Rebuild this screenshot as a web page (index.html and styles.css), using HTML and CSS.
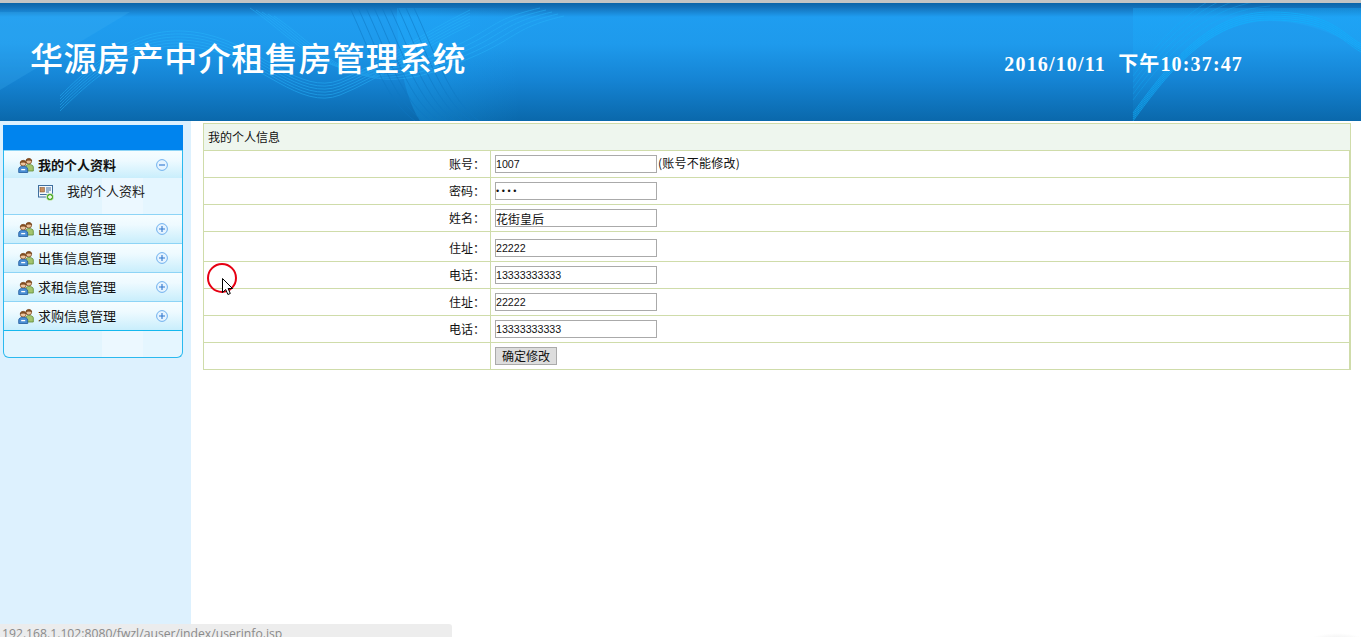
FILE: index.html
```html
<!DOCTYPE html>
<html lang="zh-CN">
<head>
<meta charset="utf-8">
<title>华源房产中介租售房管理系统</title>
<link rel="stylesheet" href="styles.css">
</head>
<body>
<svg class="defs" width="0" height="0" aria-hidden="true">
  <defs>
    <symbol id="users" viewBox="0 0 16 16">
      <circle cx="10.8" cy="4.2" r="2.8" fill="#eabf95" stroke="#7a4a22" stroke-width=".8"/>
      <path d="M7.9 3.8c.5-2.4 5.2-2.8 5.9 0-1.7-.8-4-.8-5.9 0z" fill="#8a5326" stroke="#6e3f18" stroke-width=".5"/>
      <path d="M8 14V9.8c0-1.6 1.2-2.4 2.9-2.4s4.4.8 4.4 2.4V14z" fill="#a3c46e" stroke="#5d8a35" stroke-width=".8"/>
      <circle cx="5.2" cy="6.2" r="2.9" fill="#f0c69e" stroke="#7a4a22" stroke-width=".8"/>
      <path d="M2.2 5.8c.5-2.4 5.3-2.8 6 .1-1.8-.9-4.1-.9-6-.1z" fill="#8a5326" stroke="#6e3f18" stroke-width=".5"/>
      <path d="M.7 15.5v-3.4c0-1.9 2-2.8 4.5-2.8s4.5.9 4.5 2.8v3.4z" fill="#4a8ed4" stroke="#1f5a9c" stroke-width=".8"/>
      <path d="M3.2 12.6h4" stroke="#fff" stroke-width="1.3"/>
    </symbol>
    <symbol id="plus" viewBox="0 0 12 12">
      <circle cx="6" cy="6" r="5.4" fill="#e6f4ff" stroke="#6fb0ee"/>
      <path d="M3 6h6M6 3v6" stroke="#2f77cf" stroke-width="1.1"/>
    </symbol>
    <symbol id="minus" viewBox="0 0 12 12">
      <circle cx="6" cy="6" r="5.4" fill="#e6f4ff" stroke="#6fb0ee"/>
      <path d="M3 6h6" stroke="#2f77cf" stroke-width="1.1"/>
    </symbol>
  </defs>
</svg>

<header class="banner">
  <svg class="waves" width="1361" height="118" viewBox="0 3 1361 118" aria-hidden="true">
    <defs>
      <linearGradient id="fade" x1="0" y1="0" x2="1" y2="0">
        <stop offset="0" stop-color="#1fb0ff" stop-opacity=".3"/>
        <stop offset="1" stop-color="#1fb0ff" stop-opacity="0"/>
      </linearGradient>
      <linearGradient id="fadeDown" x1="0" y1="0" x2="0" y2="1">
        <stop offset="0" stop-color="#1cb0ff" stop-opacity=".35"/>
        <stop offset="1" stop-color="#1cb0ff" stop-opacity=".05"/>
      </linearGradient>
      <path id="a" d="M60 96C110 46 150 22 205 34S300 96 340 80 420 34 470 10" fill="none"/>
      <path id="b" d="M250 8C300 42 330 92 415 62S480 22 540 8" fill="none"/>
      <path id="c" d="M1133 121C1170 70 1210 20 1270 20S1340 40 1361 52" fill="none"/>
      <path id="d" d="M330 8C350 50 365 100 395 121" fill="none"/>
      <path id="e" d="M1133 100C1170 50 1210 10 1270 6" fill="none"/>
    </defs>
    <path d="M0 12H130L0 90z" fill="#46b8f6" opacity=".22"/>
    <path d="M397 8H520V121H420C400 90 397 40 397 8z" fill="url(#fade)"/>
    <path d="M1133 121V8H1361V50C1330 30 1300 21 1270 21 1210 21 1170 70 1133 121z" fill="url(#fadeDown)"/>
    <g stroke="#27b4fb" stroke-width="1" opacity=".5">
      <use href="#a"/><use href="#a" y="3"/><use href="#a" y="6"/><use href="#a" y="9"/><use href="#a" y="12"/><use href="#a" y="15"/>
      <use href="#b"/><use href="#b" x="6" y="2"/><use href="#b" x="12" y="4"/><use href="#b" x="18" y="6"/><use href="#b" x="24" y="8"/>
    </g>
    <g stroke="#0f78c4" stroke-width="1" opacity=".55">
      <use href="#d" x="20"/><use href="#d" x="28"/><use href="#d" x="36"/><use href="#d" x="44"/><use href="#d" x="52"/><use href="#d" x="60"/><use href="#d" x="68"/><use href="#d" x="76"/><use href="#d" x="84"/>
    </g>
    <g stroke="#12b4ff" stroke-width="1" opacity=".6">
      <use href="#c"/><use href="#c" y="-2"/><use href="#c" y="-4"/><use href="#c" y="-6"/><use href="#c" y="-8"/>
    </g>
    <g stroke="#12b4ff" stroke-width="1" opacity=".3">
      <use href="#e"/><use href="#e" y="-6"/><use href="#e" y="-12"/><use href="#e" y="-18"/><use href="#e" y="-24"/>
    </g>
  </svg>
  <h1 class="title">华源房产中介租售房管理系统</h1>
  <div class="clock">2016/10/11&nbsp;&nbsp;下午10:37:47</div>
</header>

<div class="body-row">
  <aside class="sidebar">
    <nav class="panel">
      <div class="panel-head"></div>
      <div class="group-head active">
        <svg class="ico-users"><use href="#users"/></svg>
        <span class="group-label">我的个人资料</span>
        <svg class="ico-toggle"><use href="#minus"/></svg>
      </div>
      <div class="group-body">
        <svg class="ico-doc" viewBox="0 0 16 16" aria-hidden="true">
          <rect x=".5" y=".5" width="14" height="11.5" fill="#f4f8fc" stroke="#3f6f9f"/>
          <rect x="2" y="2.5" width="4.5" height="4.5" fill="#c78d5e" stroke="#7a4a22" stroke-width=".5"/>
          <path d="M8 3h5M8 5h5M8 7h3M2 9.5h7" stroke="#3f6f9f"/>
          <circle cx="12" cy="12" r="3.8" fill="#4fae2e" stroke="#fff" stroke-width=".7"/>
          <path d="M10 12h4M12 10v4" stroke="#fff" stroke-width="1.3"/>
        </svg>
        <span>我的个人资料</span>
      </div>
      <div class="group-head">
        <svg class="ico-users"><use href="#users"/></svg>
        <span class="group-label">出租信息管理</span>
        <svg class="ico-toggle"><use href="#plus"/></svg>
      </div>
      <div class="group-head">
        <svg class="ico-users"><use href="#users"/></svg>
        <span class="group-label">出售信息管理</span>
        <svg class="ico-toggle"><use href="#plus"/></svg>
      </div>
      <div class="group-head">
        <svg class="ico-users"><use href="#users"/></svg>
        <span class="group-label">求租信息管理</span>
        <svg class="ico-toggle"><use href="#plus"/></svg>
      </div>
      <div class="group-head last">
        <svg class="ico-users"><use href="#users"/></svg>
        <span class="group-label">求购信息管理</span>
        <svg class="ico-toggle"><use href="#plus"/></svg>
      </div>
      <div class="panel-foot"></div>
    </nav>
  </aside>

  <main class="content">
    <table class="info">
      <colgroup><col class="col-key"><col></colgroup>
      <tr class="row-title"><td colspan="2" class="caption">我的个人信息</td></tr>
      <tr><td class="key">账号：</td><td class="val"><input class="field" type="text" value="1007"><span class="note">(账号不能修改)</span></td></tr>
      <tr><td class="key">密码：</td><td class="val"><input class="field field-pass" type="password" value="1007"></td></tr>
      <tr><td class="key">姓名：</td><td class="val"><input class="field field-cjk" type="text" value="花街皇后"></td></tr>
      <tr class="row-tall"><td class="key">住址：</td><td class="val"><input class="field" type="text" value="22222"></td></tr>
      <tr><td class="key">电话：</td><td class="val"><input class="field" type="text" value="13333333333"></td></tr>
      <tr><td class="key">住址：</td><td class="val"><input class="field" type="text" value="22222"></td></tr>
      <tr><td class="key">电话：</td><td class="val"><input class="field" type="text" value="13333333333"></td></tr>
      <tr><td class="key"></td><td class="val"><button class="submit" type="button">确定修改</button></td></tr>
    </table>
  </main>
</div>

<svg class="pointer" width="34" height="38" viewBox="0 0 34 38" aria-hidden="true">
  <circle cx="15" cy="15" r="14" fill="none" stroke="#e60012" stroke-width="2"/>
  <path d="M15.5 15.5v14l3.2-3 2.2 5 2.4-1-2.2-5h4.4z" fill="#fff" stroke="#000" stroke-width="1"/>
</svg>
<div class="statusbar">192.168.1.102:8080/fwzl/auser/index/userinfo.jsp</div>
<div class="corner-shadow"></div>
</body>
</html>
```
FILE: styles.css
```css
* { box-sizing: border-box; }
html, body {
  margin: 0;
  height: 100%;
  overflow: hidden;
  background: #fff;
}
body {
  display: flex;
  flex-direction: column;
  font: 12px "Noto Sans CJK SC", sans-serif;
  color: #111;
  border-top: 3px solid #c4c4c4;
}
.defs { position: absolute; }

.banner {
  position: relative;
  height: 118px;
  flex: none;
  display: flex;
  justify-content: space-between;
  align-items: center;
  padding: 0 118px 0 30px;
  background: linear-gradient(#0a64a8 0, #1370b8 4px, #1f9df0 14px, #1e9aec 35%, #1584d4 65%, #0a68ab 100%);
  overflow: hidden;
}
.waves { position: absolute; left: 0; top: 0; }
.title {
  position: relative;
  margin: -3px 0 0;
  font: 500 33px/1 "Liberation Serif", "Noto Sans CJK SC", serif;
  letter-spacing: .55px;
  color: #fff;
  white-space: nowrap;
}
.clock {
  position: relative;
  margin-top: 3px;
  font: 700 20px/1 "Liberation Serif", "Noto Sans CJK SC", serif;
  letter-spacing: 1.15px;
  color: #fff;
  white-space: nowrap;
}

.body-row { flex: 1; display: flex; min-height: 0; }

.sidebar {
  flex: none;
  width: 191px;
  padding: 4px 8px 0 3px;
  background: #ddf1fe;
}
.panel {
  border: 1px solid #2bb9ef;
  border-top: 0;
  border-radius: 0 0 6px 6px;
  background: linear-gradient(90deg, #e3f5fe 0 55%, #ecf8ff 55% 78%, #e5f6ff 78%);
}
.panel-head { height: 25px; margin: 0 -1px; background: #0084ee; }
.group-head {
  height: 29px;
  display: flex;
  align-items: center;
  padding-left: 14px;
  font-size: 13px;
  color: #111;
  background: linear-gradient(#f6fdff, #eefaff 35%, #c9eefc);
  border-top: 1px solid #8dd4f6;
}
.group-head.active { height: 28px; }
.group-head.active .group-label { font-weight: 700; padding: 0; }
.group-head.last { border-bottom: 1px solid #15b8ee; height: 30px; }
.ico-users { width: 16px; height: 16px; flex: none; margin-right: 4px; }
.group-label { flex: 1; line-height: 1; padding-bottom: 2px; }
.ico-toggle { width: 12px; height: 12px; flex: none; margin-right: 14px; }
.group-body {
  height: 36px;
  display: flex;
  align-items: flex-start;
  padding: 3px 0 0 34px;
  font-size: 13px;
  line-height: 20px;
  color: #222;
}
.ico-doc { width: 16px; height: 16px; flex: none; margin: 4px 13px 0 0; }
.panel-foot { height: 26px; }

.content { flex: 1; padding: 2px 10px 0 12px; min-width: 0; }
.info {
  width: 1148px;
  border-collapse: collapse;
  table-layout: fixed;
}
.col-key { width: 287px; }
.info td {
  border: 1px solid #cfdcaa;
  padding: 0;
  height: 27px;
  vertical-align: middle;
  line-height: 1;
}
.row-title td { background: #eef6ee; }
.caption { padding-left: 4px !important; }
.row-tall td { height: 30px; padding-top: 2px; }
.key { text-align: right; padding-right: 5px !important; }
.val { padding-left: 4px !important; border-right-width: 2px !important; }
.note { margin-left: 1px; position: relative; top: 1px; letter-spacing: .25px; }
.field {
  width: 162px;
  height: 18px;
  margin: 0;
  padding: 0 1px 0 0;
  border: 1px solid #aaa;
  border-radius: 0;
  outline: 0;
  vertical-align: middle;
  background: #fff;
  color: #111;
  font: 10.67px "Liberation Sans", sans-serif;
}
.field-cjk { font: 12px "Noto Sans CJK SC", sans-serif; }
.field-pass { letter-spacing: 2.6px; font-size: 9px; }
.submit {
  display: block;
  width: 62px;
  height: 18px;
  padding: 0;
  border: 1px solid #aaa;
  border-radius: 0;
  background: #ddd;
  color: #111;
  font: 12px/1 "Noto Sans CJK SC", sans-serif;
}

.pointer { position: absolute; left: 207px; top: 263px; }
.statusbar {
  position: absolute;
  left: 0;
  bottom: 0;
  width: 452px;
  height: 13px;
  padding: 3px 0 0 2px;
  overflow: hidden;
  background: rgba(236, 236, 236, .93);
  border-top-right-radius: 3px;
  color: #8a8a8a;
  font: 12.2px/14px "Open Sans", sans-serif;
  white-space: nowrap;
}
.corner-shadow {
  position: absolute;
  right: 0;
  bottom: -10px;
  width: 60px;
  height: 14px;
  background: radial-gradient(ellipse at 60% 100%, #ddd, rgba(255, 255, 255, 0) 70%);
}
```
